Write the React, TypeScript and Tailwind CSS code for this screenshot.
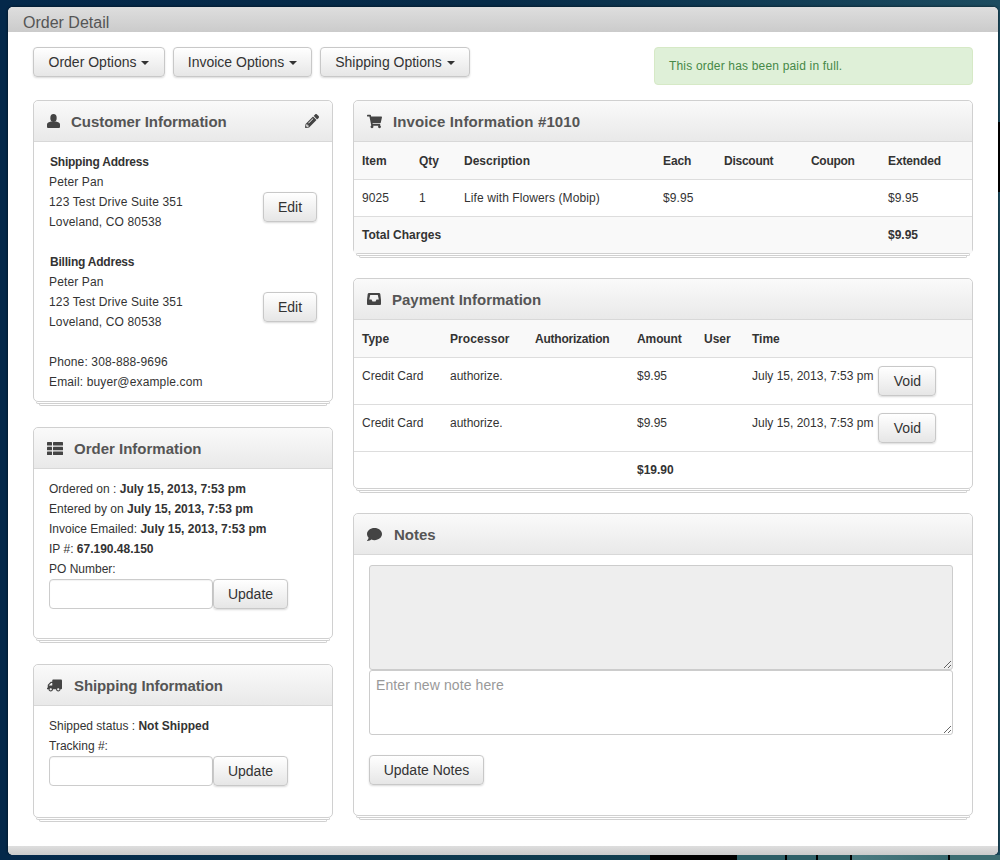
import React from "react";
import { FaPencilAlt, FaTruck, FaShoppingCart, FaComment } from "react-icons/fa";

const btn =
  "rounded border border-[#c8c8c8] bg-gradient-to-b from-white to-[#e6e6e6] text-[14px] text-[#333] shadow-[0_1px_2px_rgba(0,0,0,0.15)]";

const UserIcon = () => (
  <svg width="13" height="14" viewBox="0 0 13 14" fill="currentColor">
    <ellipse cx="6.5" cy="4" rx="3.2" ry="4" />
    <path d="M0 13V10.5C0 8.7 2 8.2 4 7.5H9C11 8.2 13 8.7 13 10.5V13Q13 14 12 14H1Q0 14 0 13Z" />
  </svg>
);

const ListIcon = () => (
  <svg width="16" height="13" viewBox="0 0 16 13" fill="currentColor">
    <rect x="0" y="0" width="5" height="3.4" rx="0.5" />
    <rect x="0" y="4.8" width="5" height="3.4" rx="0.5" />
    <rect x="0" y="9.6" width="5" height="3.4" rx="0.5" />
    <rect x="6" y="0" width="10" height="3.4" rx="0.5" />
    <rect x="6" y="4.8" width="10" height="3.4" rx="0.5" />
    <rect x="6" y="9.6" width="10" height="3.4" rx="0.5" />
  </svg>
);

const InboxIcon = () => (
  <svg width="14" height="12" viewBox="0 0 14 12" fill="currentColor">
    <path
      fillRule="evenodd"
      d="M2 0H12Q13 0 13.3 1L14 7V11Q14 12 13 12H1Q0 12 0 11V7L.7 1Q1 0 2 0ZM3.2 2L2.2 6.5H4.5L5.5 8.5H8.5L9.5 6.5H11.8L10.8 2Z"
    />
  </svg>
);

const Panel: React.FC<{
  icon: React.ReactNode;
  title: string;
  right?: React.ReactNode;
  gap?: string;
  track?: string;
  children: React.ReactNode;
}> = ({ icon, title, right, gap = "w-[27px]", track = "", children }) => {
  return (
    <div>
      <div className="rounded-[5px] border border-[#d0d0d0] bg-white">
        <div className="flex h-[41px] items-center rounded-t-[5px] border-b border-[#d8d8d8] bg-gradient-to-b from-[#fafafa] to-[#e9e9e9] px-[13px] text-[15px] font-bold text-[#555]">
          <span className={`flex ${gap} items-center text-[15px] text-[#444]`}>{icon}</span>
          <span className={`mt-[2px] ${track}`}>{title}</span>
          {right}
        </div>
        {children}
      </div>
      <div className="mx-[3px] h-[2px] rounded-b border-x border-b border-[#d0d0d0]" />
      <div className="mx-[6px] h-[2px] rounded-b border-x border-b border-[#d0d0d0]" />
    </div>
  );
};

const UpdateRow: React.FC = () => {
  return (
    <div className="flex h-[30px] w-[239px]">
      <input className="h-[30px] w-[164px] rounded border border-[#ccc] bg-white shadow-[inset_0_1px_1px_rgba(0,0,0,0.05)]" />
      <button className={`h-[30px] w-[75px] ${btn}`}>Update</button>
    </div>
  );
};

const Dropdown: React.FC<{ label: string; width: string }> = ({ label, width }) => {
  return (
    <button className={`flex h-[30px] items-center justify-center gap-[5px] ${width} ${btn}`}>
      {label}
      <span className="mt-[2px] h-0 w-0 border-x-[4px] border-t-[4px] border-x-transparent border-t-[#333]" />
    </button>
  );
};

const Address: React.FC<{ title: string }> = ({ title }) => {
  return (
    <div className="flex items-end justify-between pr-[15px]">
      <div className="tracking-[0.14px]">
        <div className="pl-px font-bold tracking-[-0.22px]">{title}</div>
        <div>Peter Pan</div>
        <div>123 Test Drive Suite 351</div>
        <div>Loveland, CO 80538</div>
      </div>
      <button className={`mb-[10px] h-[30px] w-[54px] ${btn}`}>Edit</button>
    </div>
  );
};

export default function App() {
  return (
    <div className="relative h-[860px] overflow-hidden bg-gradient-to-r from-[#04284a] via-[#062b48] to-[#1c4c60] font-['Liberation_Sans',Arial,sans-serif] text-[12px] leading-[20px] text-[#333]">
      <div className="flex h-[855px] pl-[8px] pt-[7px]">
        <div className="flex h-[848px] w-[990px] flex-col rounded-[5px] bg-white shadow-[0_0_3px_rgba(0,0,0,0.7)]">
          <div className="h-[25px] rounded-t-[5px] bg-gradient-to-b from-[#dedede] to-[#cbcbcb] pl-[15px] text-[16px] leading-[31px] text-[#555]">
            Order Detail
          </div>
          <div className="flex-1 px-[25px] pt-[15px]">
            <div className="flex items-start justify-between">
              <div className="flex gap-[8px]">
                <Dropdown label="Order Options" width="w-[132px]" />
                <Dropdown label="Invoice Options" width="w-[139px]" />
                <Dropdown label="Shipping Options" width="w-[150px]" />
              </div>
              <div className="flex h-[38px] w-[319px] items-center rounded border border-[#d6e9c6] bg-[#dff0d8] pl-[14px] tracking-[0.18px] text-[#468847]">
                This order has been paid in full.
              </div>
            </div>

            <div className="mt-[15px] flex gap-[20px]">
              <div className="flex w-[300px] flex-col gap-[21px]">
                <Panel
                  icon={<UserIcon />}
                  title="Customer Information"
                  gap="w-[24px]"
                  track="tracking-[-0.05px]"
                  right={<FaPencilAlt className="ml-auto text-[14px] text-[#444]" />}
                >
                  <div className="pb-[9px] pl-[15px] pt-[10px]">
                    <Address title="Shipping Address" />
                    <div className="mt-[20px]">
                      <Address title="Billing Address" />
                    </div>
                    <div className="mt-[20px] tracking-[0.14px]">Phone: 308-888-9696</div>
                    <div className="tracking-[0.14px]">Email: buyer@example.com</div>
                  </div>
                </Panel>
                <Panel icon={<ListIcon />} title="Order Information" gap="w-[27px]">
                  <div className="pb-[29px] pl-[15px] pt-[10px]">
                    <div>
                      Ordered on : <b>July 15, 2013, 7:53 pm</b>
                    </div>
                    <div>
                      Entered by on <b>July 15, 2013, 7:53 pm</b>
                    </div>
                    <div>
                      Invoice Emailed: <b>July 15, 2013, 7:53 pm</b>
                    </div>
                    <div>
                      IP #: <b>67.190.48.150</b>
                    </div>
                    <div>PO Number:</div>
                    <UpdateRow />
                  </div>
                </Panel>
                <Panel
                  icon={<FaTruck className="-scale-x-100" />}
                  title="Shipping Information"
                  gap="w-[27px]"
                  track="tracking-[-0.1px]"
                >
                  <div className="pb-[31px] pl-[15px] pt-[10px]">
                    <div>
                      Shipped status : <b>Not Shipped</b>
                    </div>
                    <div>Tracking #:</div>
                    <UpdateRow />
                  </div>
                </Panel>
              </div>

              <div className="flex w-[620px] flex-col gap-[20px]">
                <Panel
                  icon={<FaShoppingCart />}
                  title="Invoice Information #1010"
                  gap="w-[26px]"
                  track="tracking-[0.12px]"
                >
                  <table className="w-full table-fixed border-collapse text-left">
                    <colgroup>
                      <col className="w-[57px]" />
                      <col className="w-[45px]" />
                      <col className="w-[199px]" />
                      <col className="w-[61px]" />
                      <col className="w-[87px]" />
                      <col className="w-[77px]" />
                      <col />
                    </colgroup>
                    <thead>
                      <tr className="h-[37px] bg-[#f9f9f9] font-bold">
                        <td className="px-[8px] pt-[2px]">Item</td>
                        <td className="px-[8px] pt-[2px]">Qty</td>
                        <td className="px-[8px] pt-[2px]">Description</td>
                        <td className="px-[8px] pt-[2px] tracking-[-0.1px]">Each</td>
                        <td className="px-[8px] pt-[2px] tracking-[-0.25px]">Discount</td>
                        <td className="px-[8px] pt-[2px] tracking-[-0.3px]">Coupon</td>
                        <td className="px-[8px] pt-[2px] tracking-[-0.12px]">Extended</td>
                      </tr>
                    </thead>
                    <tbody>
                      <tr className="h-[37px] border-t border-[#ddd] tracking-[0.1px]">
                        <td className="px-[8px]">9025</td>
                        <td className="px-[8px]">1</td>
                        <td className="px-[8px]">Life with Flowers (Mobip)</td>
                        <td className="px-[8px]">$9.95</td>
                        <td />
                        <td />
                        <td className="px-[8px]">$9.95</td>
                      </tr>
                      <tr className="h-[37px] border-t border-[#ddd] bg-[#f9f9f9] font-bold">
                        <td colSpan={6} className="px-[8px]">
                          Total Charges
                        </td>
                        <td className="px-[8px]">$9.95</td>
                      </tr>
                    </tbody>
                  </table>
                </Panel>

                <Panel icon={<InboxIcon />} title="Payment Information" gap="w-[25px]">
                  <table className="w-full table-fixed border-collapse text-left">
                    <colgroup>
                      <col className="w-[88px]" />
                      <col className="w-[85px]" />
                      <col className="w-[102px]" />
                      <col className="w-[67px]" />
                      <col className="w-[48px]" />
                      <col />
                    </colgroup>
                    <thead>
                      <tr className="h-[37px] bg-[#f9f9f9] font-bold">
                        <td className="px-[8px] pt-[2px]">Type</td>
                        <td className="px-[8px] pt-[2px] tracking-[0.1px]">Processor</td>
                        <td className="px-[8px] pt-[2px] tracking-[-0.23px]">Authorization</td>
                        <td className="px-[8px] pt-[2px] tracking-[-0.1px]">Amount</td>
                        <td className="px-[8px] pt-[2px]">User</td>
                        <td className="px-[8px] pt-[2px]">Time</td>
                      </tr>
                    </thead>
                    <tbody>
                      {[0, 1].map((i) => (
                        <tr key={i} className="h-[47px] border-t border-[#ddd] align-top">
                          <td className="px-[8px] pt-[8px]">Credit Card</td>
                          <td className="px-[8px] pt-[8px]">authorize.</td>
                          <td />
                          <td className="px-[8px] pt-[8px]">$9.95</td>
                          <td />
                          <td className="px-[8px] pt-[8px]">
                            <div className="flex items-start whitespace-nowrap">
                              July 15, 2013, 7:53 pm
                              <button className={`ml-[5px] h-[30px] w-[58px] ${btn}`}>Void</button>
                            </div>
                          </td>
                        </tr>
                      ))}
                      <tr className="h-[37px] border-t border-[#ddd]">
                        <td colSpan={3} />
                        <td className="px-[8px] font-bold">$19.90</td>
                        <td colSpan={2} />
                      </tr>
                    </tbody>
                  </table>
                </Panel>

                <Panel icon={<FaComment />} title="Notes" gap="w-[27px]">
                  <div className="flex flex-col px-[15px] pb-[30px] pt-[10px]">
                    <textarea
                      readOnly
                      className="block h-[105px] w-[584px] rounded-[3px] border border-[#ccc] bg-[#eee]"
                    />
                    <textarea
                      placeholder="Enter new note here"
                      className="block h-[65px] w-[584px] rounded-[3px] border border-[#ccc] bg-white px-[6px] py-[4px] text-[14px] tracking-[0.1px] placeholder:text-[#999]"
                    />
                    <button className={`mt-[20px] h-[30px] w-[115px] ${btn}`}>Update Notes</button>
                  </div>
                </Panel>
              </div>
            </div>
          </div>
          <div className="h-[9px] rounded-b-[5px] bg-gradient-to-b from-[#dedede] to-[#cbcbcb]" />
        </div>
        <div className="mt-[115px] h-[70px] w-[2px] bg-black" />
      </div>
      <div className="flex h-[5px]">
        <div className="w-[650px] bg-gradient-to-r from-[#04284a] to-[#123f4f]" />
        <div className="w-[87px] bg-black" />
        <div className="w-[50px] border-r-2 border-black bg-[#2d5e66]" />
        <div className="w-[31px] border-r-2 border-black bg-[#2f6068]" />
        <div className="w-[34px] border-r-2 border-black bg-[#326369]" />
        <div className="w-[98px] border-r-2 border-black bg-gradient-to-r from-[#4a7a80] to-[#3a6a70]" />
        <div className="flex-1 bg-[#3d6d72]" />
      </div>
    </div>
  );
}
